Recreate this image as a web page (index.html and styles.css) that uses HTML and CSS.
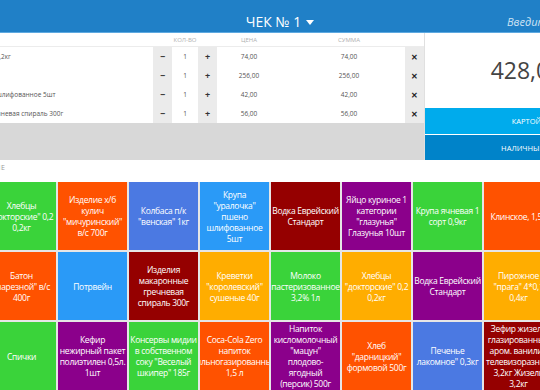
FILE: index.html
```html
<!DOCTYPE html>
<html lang="ru">
<head>
    <meta charset="UTF-8">
    <meta name="viewport" content="width=device-width, initial-scale=1.0">
    <title>Касса</title>
    <link rel="stylesheet" href="styles.css">
</head>
<body>
    <div class="page">
        <!-- Top bar -->
        <header class="topbar">
            <div></div>
            <div class="check-title">ЧЕК № 1
                <svg class="caret" width="8" height="5" viewBox="0 0 8 5"><path d="M0 0H8L4 5Z" fill="#fff"/></svg>
            </div>
            <input class="search" type="text" placeholder="Введите название или штрихкод">
        </header>

        <div class="main">
            <!-- Check table -->
            <div class="check">
                <div class="row head">
                    <div></div>
                    <div class="qty-head">КОЛ-ВО</div>
                    <div class="price">ЦЕНА</div>
                    <div></div>
                    <div class="sum">СУММА</div>
                    <div></div>
                </div>
                <div class="row">
                    <div class="name">Хлебцы "докторские" 0,2 0,2кг</div>
                    <div class="btn">&minus;</div><div class="qty">1</div><div class="btn">+</div>
                    <div class="price">74,00</div><div></div><div class="sum">74,00</div>
                    <div class="del">&#x2715;</div>
                </div>
                <div class="row">
                    <div class="name">Колбаса п/к "венская"</div>
                    <div class="btn">&minus;</div><div class="qty">1</div><div class="btn">+</div>
                    <div class="price">256,00</div><div></div><div class="sum">256,00</div>
                    <div class="del">&#x2715;</div>
                </div>
                <div class="row">
                    <div class="name">Крупа "уралочка" пшено шлифованное 5шт</div>
                    <div class="btn">&minus;</div><div class="qty">1</div><div class="btn">+</div>
                    <div class="price">42,00</div><div></div><div class="sum">42,00</div>
                    <div class="del">&#x2715;</div>
                </div>
                <div class="row">
                    <div class="name">Изделия макаронные гречневая спираль 300г</div>
                    <div class="btn">&minus;</div><div class="qty">1</div><div class="btn">+</div>
                    <div class="price">56,00</div><div></div><div class="sum">56,00</div>
                    <div class="del">&#x2715;</div>
                </div>
                <div class="check-fill"></div>
            </div>

            <!-- Total and payment -->
            <div class="pay">
                <div class="total">428,00</div>
                <button class="pay-btn card">КАРТОЙ</button>
                <button class="pay-btn cash">НАЛИЧНЫМИ</button>
            </div>
        </div>

        <div class="section-title">ЧАСТО ПРОДАВАЕМЫЕ</div>

        <!-- Quick products -->
        <div class="tiles">
            <div class="tile blue">Сахар песок 1кг</div>
            <div class="tile green">Хлебцы "докторские" 0,2 0,2кг</div>
            <div class="tile orange">Изделие х/б кулич "мичуринский" в/с 700г</div>
            <div class="tile blue">Колбаса п/к "венская" 1кг</div>
            <div class="tile sky">Крупа "уралочка" пшено шлифованное 5шт</div>
            <div class="tile red">Водка Еврейский Стандарт</div>
            <div class="tile purple">Яйцо куриное 1 категории "глазунья" Глазунья 10шт</div>
            <div class="tile green">Крупа ячневая 1 сорт 0,9кг</div>
            <div class="tile orange">Клинское, 1,5л</div>

            <div class="tile purple">Масло сливочное 200г</div>
            <div class="tile orange">Батон "нарезной" в/с 400г</div>
            <div class="tile sky">Потрвейн</div>
            <div class="tile red">Изделия макаронные гречневая спираль 300г</div>
            <div class="tile amber">Креветки "королевский" сушеные 40г</div>
            <div class="tile green">Молоко пастеризованное 3,2% 1л</div>
            <div class="tile amber">Хлебцы "докторские" 0,2 0,2кг</div>
            <div class="tile purple">Водка Еврейский Стандарт</div>
            <div class="tile amber">Пирожное "прага" 4*0,1 0,4кг</div>

            <div class="tile red">Чай черный 100г</div>
            <div class="tile green">Спички</div>
            <div class="tile purple">Кефир нежирный пакет полиэтилен 0,5л. 1шт</div>
            <div class="tile green">Консервы мидии в собственном соку "Веселый шкипер" 185г</div>
            <div class="tile orange">Coca-Cola Zero напиток сильногазированный 1,5 л</div>
            <div class="tile purple">Напиток кисломолочный "мацун" плодово-ягодный (персик) 500г</div>
            <div class="tile orange">Хлеб "дарницкий" формовой 500г</div>
            <div class="tile blue">Печенье лакомное" 0,3кг</div>
            <div class="tile red">Зефир жизель глазированный аром. ванилин телевизоразный 3,2кг Жизель 3,2кг</div>
        </div>
    </div>
</body>
</html>
```

FILE: styles.css
```css
* {
    box-sizing: border-box;
    margin: 0;
    padding: 0;
}

body {
    font-family: "Open Sans", "Noto Sans", sans-serif;
    background: #fff;
    color: #555;
    overflow: hidden;
    width: 540px;
    height: 390px;
}

.page {
    width: 722px;
    margin-left: -94px;
}

.topbar {
    display: grid;
    grid-template-columns: 1fr auto 1fr;
    align-items: end;
    height: 33px;
    padding: 0 0 2px 26px;
    background: #2080c7;
    border-bottom: 1px solid #5ea9e0;
}

.check-title {
    color: #fff;
    font-size: 14px;
    line-height: 17px;
    display: flex;
    align-items: center;
    gap: 5px;
}

.caret {
    margin-top: 2px;
}

.search {
    justify-self: end;
    width: 115px;
    margin-right: 10px;
    padding: 0 4px;
    background: transparent;
    border: none;
    outline: none;
    color: #fff;
    font-family: inherit;
    font-size: 11px;
    font-style: italic;
    line-height: 16px;
}

.search::placeholder {
    color: #cfe3f4;
}

.main {
    display: grid;
    grid-template-columns: 518px 1fr;
    height: 127px;
}

.check {
    display: flex;
    flex-direction: column;
}

.row {
    display: grid;
    grid-template-columns: 247px 19px 26px 19px 64px 12px 112px 19px;
    height: 19px;
    align-items: stretch;
    font-size: 6.5px;
}

.row > div {
    display: flex;
    align-items: center;
    justify-content: center;
}

.row.head {
    height: 14px;
    grid-template-columns: 247px 64px 64px 12px 112px 19px;
    border-bottom: 1px solid #ececec;
    font-size: 6px;
    color: #b0b0b0;
}

.row .name {
    justify-content: flex-start;
    padding-left: 10px;
    white-space: nowrap;
    overflow: hidden;
}

.btn, .del {
    background: #ebebeb;
    color: #333;
    font-weight: bold;
    font-size: 9px;
}

.del {
    font-size: 8px;
    color: #222;
}

.qty {
    color: #555;
}

.check-fill {
    flex: 1;
    background: #d8d8d8;
}

.pay {
    display: flex;
    flex-direction: column;
    border-left: 1px solid #e0e0e0;
}

.total {
    flex: 1;
    display: flex;
    align-items: center;
    justify-content: center;
    font-size: 23px;
    color: #444;
    padding-bottom: 2px;
}

.pay-btn {
    height: 26px;
    border: none;
    color: #fff;
    font-family: inherit;
    font-size: 7.5px;
}

.pay-btn.card {
    background: #00abec;
    margin-bottom: 1px;
}

.pay-btn.cash {
    height: 25px;
    background: #0083c9;
}

.section-title {
    height: 22px;
    padding-left: 10px;
    font-size: 7px;
    letter-spacing: 0.7px;
    line-height: 16px;
    color: #999;
}

.tiles {
    display: grid;
    grid-template-columns: repeat(9, 69px);
    grid-auto-rows: 68px;
    gap: 2px;
    margin-left: 10px;
    width: max-content;
    background: #e6e6e6;
}

.tile {
    display: flex;
    align-items: center;
    justify-content: center;
    text-align: center;
    padding: 0 1px;
    color: #fff;
    font-size: 8.5px;
    letter-spacing: -0.3px;
    line-height: 11px;
    overflow: hidden;
}

.green { background: #3ad33a; }
.orange { background: #ff5200; }
.blue { background: #4b79e2; }
.sky { background: #2a9af7; }
.red { background: #950000; }
.purple { background: #8b008b; }
.amber { background: #ffad00; }
```
